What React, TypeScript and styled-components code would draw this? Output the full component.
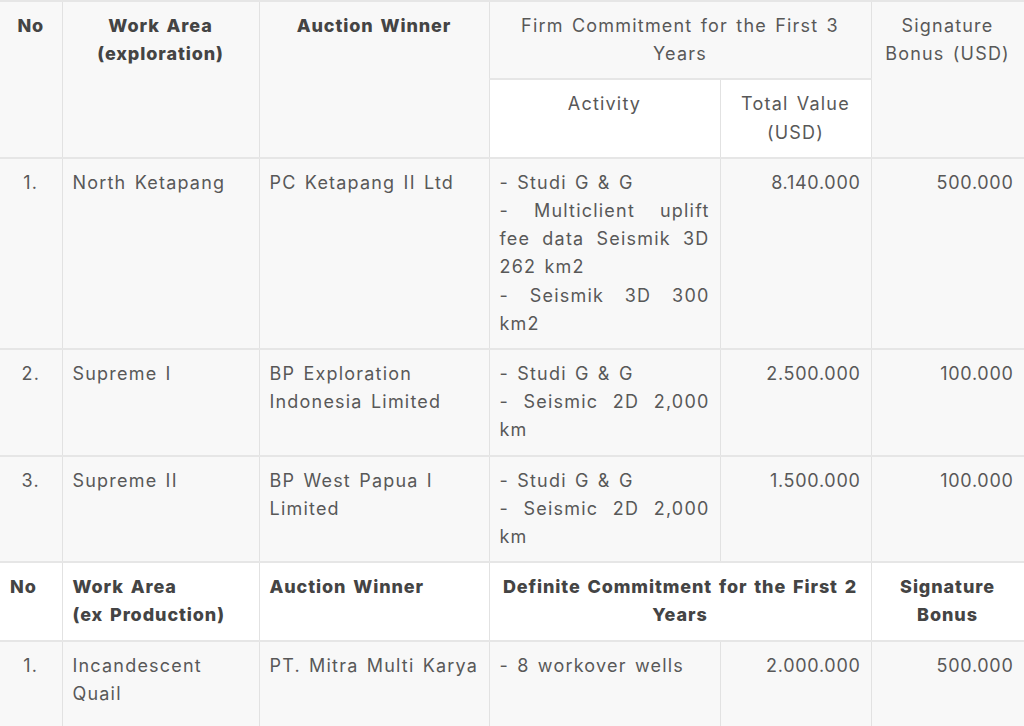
import React from 'react';
import styled, { createGlobalStyle, css } from 'styled-components';

type Align = 'left' | 'center' | 'right';

type Row = {
  no: string;
  area: string;
  winner: string;
  activity: string[];
  total: string;
  bonus: string;
};

const explorationRows: Row[] = [
  {
    no: '1.',
    area: 'North Ketapang',
    winner: 'PC Ketapang II Ltd',
    activity: ['- Studi G & G', '- Multiclient uplift fee data Seismik 3D 262 km2', '- Seismik 3D 300 km2'],
    total: '8.140.000',
    bonus: '500.000'
  },
  {
    no: '2.',
    area: 'Supreme I',
    winner: 'BP Exploration Indonesia Limited',
    activity: ['- Studi G & G', '- Seismic 2D 2,000 km'],
    total: '2.500.000',
    bonus: '100.000'
  },
  {
    no: '3.',
    area: 'Supreme II',
    winner: 'BP West Papua I Limited',
    activity: ['- Studi G & G', '- Seismic 2D 2,000 km'],
    total: '1.500.000',
    bonus: '100.000'
  }
];

const productionRows: Row[] = [
  {
    no: '1.',
    area: 'Incandescent Quail',
    winner: 'PT. Mitra Multi Karya',
    activity: ['- 8 workover wells'],
    total: '2.000.000',
    bonus: '500.000'
  }
];

const GlobalStyle = createGlobalStyle`
  body {
    margin: 0;
    background: #ffffff;
    font-family: Inter, "Open Sans", sans-serif;
  }
`;

const DataRow = ({ row }: { row: Row }) => (
  <TableRow $shade>
    <Cell $align='center'>{row.no}</Cell>
    <Cell>{row.area}</Cell>
    <Cell>{row.winner}</Cell>
    <Cell $justify>
      {row.activity.map((line, i) => (
        <ActivityLine key={i}>{line}</ActivityLine>
      ))}
    </Cell>
    <Cell $align='right' $tight>{row.total}</Cell>
    <Cell $align='right' $tight>{row.bonus}</Cell>
  </TableRow>
);

const App = () => {
  return <>
    <GlobalStyle />
    <Table>
      <colgroup>
        <col style={{ width: 62 }} />
        <col style={{ width: 197 }} />
        <col style={{ width: 230 }} />
        <col style={{ width: 231 }} />
        <col style={{ width: 151 }} />
        <col style={{ width: 153 }} />
      </colgroup>
      <tbody>
        <TableRow $shade>
          <HeadCell rowSpan={2} $align='center' $bold>No</HeadCell>
          <HeadCell rowSpan={2} $align='center' $bold>Work Area<br />(exploration)</HeadCell>
          <HeadCell rowSpan={2} $align='center' $bold>Auction Winner</HeadCell>
          <HeadCell colSpan={2} $align='center'>Firm Commitment for the First 3 Years</HeadCell>
          <HeadCell rowSpan={2} $align='center'>Signature Bonus (USD)</HeadCell>
        </TableRow>
        <TableRow>
          <HeadCell $align='center'>Activity</HeadCell>
          <HeadCell $align='center'>Total Value (USD)</HeadCell>
        </TableRow>
        {explorationRows.map((row) => <DataRow key={row.area} row={row} />)}
        <TableRow>
          <HeadCell $bold>No</HeadCell>
          <HeadCell $bold>Work Area<br />(ex Production)</HeadCell>
          <HeadCell $bold>Auction Winner</HeadCell>
          <HeadCell colSpan={2} $align='center' $bold>Definite Commitment for the First 2 Years</HeadCell>
          <HeadCell $align='center' $bold>Signature Bonus</HeadCell>
        </TableRow>
        {productionRows.map((row) => <DataRow key={row.area} row={row} />)}
      </tbody>
    </Table>
  </>;
};

const Table = styled.table`
  width: 1024px;
  table-layout: fixed;
  border-collapse: collapse;
  font-family: Inter, "Open Sans", sans-serif;
  font-size: 18px;
  line-height: 28.2px;
  letter-spacing: 1.2px;
  word-spacing: 2px;
  color: #585858;

  tr:last-child td {
    padding-bottom: 24px;
  }
`;

const TableRow = styled.tr<{ $shade?: boolean }>`
  background-color: ${({ $shade }) => $shade ? '#f8f8f8' : '#ffffff'};
`;

const cellBase = css<{ $align?: Align; $bold?: boolean; $justify?: boolean }>`
  padding: 10px 10px 10px 10px;
  vertical-align: top;
  text-align: ${({ $align, $justify }) => $justify ? 'justify' : $align || 'left'};
  border-left: 1px solid #e2e2e2;
  border-right: 1px solid #e2e2e2;
  border-top: 2px solid #e6e6e6;
  border-bottom: 2px solid #e6e6e6;

  &:first-child {
    border-left: none;
  }
`;

const Cell = styled.td<{ $align?: Align; $justify?: boolean; $tight?: boolean }>`
  ${cellBase};
  font-weight: 400;
  letter-spacing: ${({ $tight }) => $tight ? '0.7px' : '1.2px'};
`;

const HeadCell = styled.th<{ $align?: Align; $bold?: boolean }>`
  ${cellBase};
  font-weight: ${({ $bold }) => $bold ? 800 : 400};
  letter-spacing: ${({ $bold }) => $bold ? '0.9px' : '1.2px'};
  color: ${({ $bold }) => $bold ? '#444444' : '#585858'};
`;

const ActivityLine = styled.div`
  text-align: justify;
`;

export default App;
